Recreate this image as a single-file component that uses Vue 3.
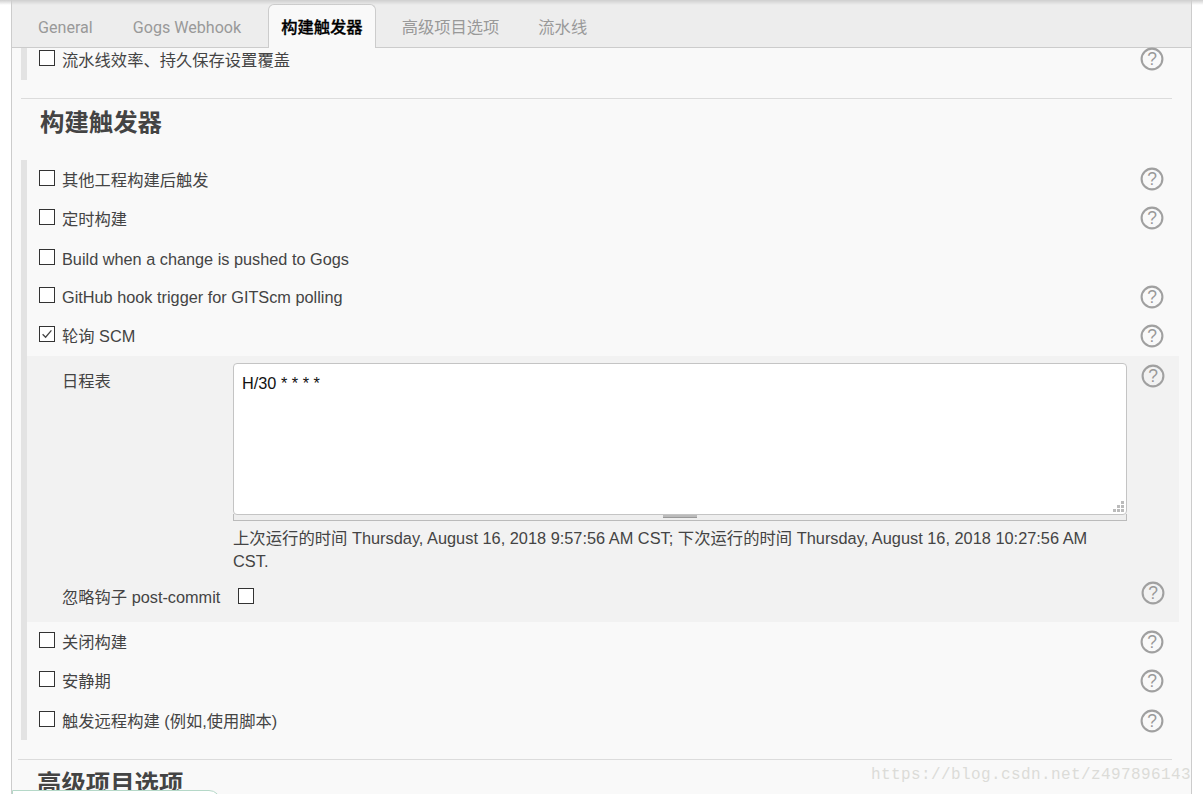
<script setup>
const topRows = [
  { label: '其他工程构建后触发', help: true, h: 39, kind: 'cjk' },
  { label: '定时构建', help: true, h: 41, kind: 'cjk pad' },
  { label: 'Build when a change is pushed to Gogs', help: false, h: 38, kind: '' },
  { label: 'GitHub hook trigger for GITScm polling', help: true, h: 37, kind: 'low' },
  { label: '轮询 SCM', help: true, checked: true, h: 41, kind: 'cjk nudge' }
]
const bottomRows = [
  { label: '关闭构建', help: true, h: 39 },
  { label: '安静期', help: true, h: 40 },
  { label: '触发远程构建 (例如,使用脚本)', help: true, h: 39 }
]
const tabs = [
  { text: 'General', latin: true },
  { text: 'Gogs Webhook', latin: true },
  { text: '构建触发器', active: true },
  { text: '高级项目选项' },
  { text: '流水线' }
]
</script>

<template>
  <div class="page">
    <div class="panel">
      <nav class="tabs">
        <span v-for="t in tabs" :key="t.text" class="tab" :class="{ active: t.active, latin: t.latin }">{{ t.text }}</span>
      </nav>

      <div class="bar-block first">
        <div class="row first-row cjk">
          <span class="box"></span>
          <span class="label">流水线效率、持久保存设置覆盖</span>
          <svg class="help" viewBox="0 0 24 24"><circle cx="12" cy="12" r="10.4" /><text x="12" y="18" text-anchor="middle">?</text></svg>
        </div>
      </div>

      <div class="rule"></div>
      <h2 class="heading">构建触发器</h2>

      <div class="bar-block main">
        <div v-for="r in topRows" :key="r.label" class="row" :class="r.kind" :style="{ height: r.h + 'px' }">
          <span class="box" :class="{ on: r.checked }">
            <svg v-if="r.checked" viewBox="0 0 14 14"><path d="M2.6 7.2 5.6 10.2 11.4 3.4" /></svg>
          </span>
          <span class="label">{{ r.label }}</span>
          <svg v-if="r.help" class="help" viewBox="0 0 24 24"><circle cx="12" cy="12" r="10.4" /><text x="12" y="18" text-anchor="middle">?</text></svg>
        </div>

        <div class="nested">
          <div class="sched">
            <span class="field-label">日程表</span>
            <div class="field">
              <div class="area">
                <span>H/30 * * * *</span>
                <svg class="grip" viewBox="0 0 11 11"><path d="M8 0h3v3H8zM4 4h3v3H4zM8 4h3v3H8zM0 8h3v3H0zM4 8h3v3H4zM8 8h3v3H8z" /></svg>
              </div>
              <div class="handle"><i></i></div>
              <p class="note">上次运行的时间 Thursday, August 16, 2018 9:57:56 AM CST; 下次运行的时间 Thursday, August 16, 2018 10:27:56 AM CST.</p>
            </div>
            <svg class="help nested-help" viewBox="0 0 24 24"><circle cx="12" cy="12" r="10.4" /><text x="12" y="18" text-anchor="middle">?</text></svg>
          </div>
          <div class="ignore">
            <span class="field-label">忽略钩子 post-commit</span>
            <span class="box ignore-box"></span>
            <svg class="help ignore-help" viewBox="0 0 24 24"><circle cx="12" cy="12" r="10.4" /><text x="12" y="18" text-anchor="middle">?</text></svg>
          </div>
        </div>

        <div v-for="r in bottomRows" :key="r.label" class="row lower-row" :style="{ height: r.h + 'px' }">
          <span class="box"></span>
          <span class="label">{{ r.label }}</span>
          <svg class="help" viewBox="0 0 24 24"><circle cx="12" cy="12" r="10.4" /><text x="12" y="18" text-anchor="middle">?</text></svg>
        </div>
      </div>

      <div class="rule lower"></div>
      <h2 class="heading next">高级项目选项</h2>

      <div class="watermark">https://blog.csdn.net/z497896143</div>
      <div class="footer-tab"></div>
    </div>
  </div>
</template>

<style>
html, body { margin: 0; background: #fff; overflow: hidden; }
</style>

<style scoped>
.page {
  width: 1203px;
  height: 794px;
  overflow: hidden;
  position: relative;
  font-family: "Liberation Sans", "Noto Sans CJK SC", sans-serif;
  font-size: 16.3px;
  color: #444;
}
.page::before {
  content: "";
  position: absolute;
  inset: 0 0 auto 0;
  height: 5px;
  background: linear-gradient(#cfcfcf, rgba(240, 240, 240, 0));
  z-index: 3;
}
.panel {
  position: relative;
  margin-left: 11px;
  width: 1181px;
  height: 794px;
  box-sizing: border-box;
  background: #f9f9f9;
  border-left: 1px solid #ccc;
  border-right: 1px solid #ccc;
  overflow: hidden;
}
.tabs {
  height: 48px;
  box-sizing: border-box;
  display: flex;
  align-items: flex-end;
  padding-left: 13px;
  background: #ededed;
  border-bottom: 1px solid #ccc;
}
.tab {
  height: 33px;
  padding: 0 13px;
  margin-right: 13px;
  color: #999;
  white-space: nowrap;
  line-height: 26px;
}
.tab.latin {
  margin-right: 14px;
  font-family: Roboto, "Liberation Sans", sans-serif;
  font-size: 16.1px;
  line-height: 28px;
}
.tab.active {
  position: relative;
  top: 1px;
  height: 44px;
  box-sizing: border-box;
  margin-right: 13px;
  padding: 0 12px;
  line-height: 44px;
  color: #000;
  font-weight: 500;
  -webkit-text-stroke: 0.3px #000;
  background: #f9f9f9;
  border: 1px solid #ccc;
  border-bottom: 0;
  border-radius: 6px 6px 0 0;
}
.bar-block {
  margin-left: 9px;
  border-left: 6px solid #e3e3e3;
}
.bar-block.first {
  height: 32px;
}
.first-row {
  height: 24px;
}
.row {
  display: flex;
  align-items: center;
  box-sizing: border-box;
  padding-left: 12px;
  padding-right: 27px;
}
.row.pad {
  padding-bottom: 1px;
}
.box {
  flex: none;
  box-sizing: border-box;
  width: 16px;
  height: 16px;
  border: 1px solid #333;
  background: #fff;
  position: relative;
  top: -2px;
  margin-right: 7px;
}
.box.on svg {
  display: block;
  width: 14px;
  height: 14px;
}
.box.on path {
  fill: none;
  stroke: #444;
  stroke-width: 1.3;
}
.label {
  flex: 1;
  white-space: nowrap;
  position: relative;
}
.row.cjk .label {
  top: -1px;
}
.row.low .label {
  top: 1px;
}
.lower-row .label {
  top: -2px;
}
.lower-row .box {
  top: -3px;
}
.help {
  flex: none;
  width: 24px;
  height: 24px;
  margin-left: auto;
  position: relative;
  top: -1px;
}
.row.low .help,
.row.nudge .help {
  top: 0;
}
.help circle {
  fill: none;
  stroke: #a0a0a0;
  stroke-width: 2.1;
}
.help text {
  font-family: "Liberation Sans", sans-serif;
  font-size: 17.5px;
  font-weight: 400;
  fill: #999;
}
.rule {
  height: 1px;
  margin: 18px 19px 0 9px;
  background: #dcdcdc;
}
.rule.lower {
  margin: 19px 19px 0 6px;
}
.heading {
  margin: 0;
  padding: 9px 0 0 28px;
  height: 60px;
  box-sizing: border-box;
  font-size: 24.4px;
  line-height: 30px;
  font-weight: 700;
  color: #444;
}
.heading.next {
  padding: 9px 0 0 25px;
}
.main {
  height: 580px;
}
.nested {
  box-sizing: border-box;
  height: 266px;
  margin-right: 12px;
  margin-bottom: 1px;
  background: #f2f2f2;
  padding-left: 35px;
  padding-right: 14px;
}
.main > .row:first-child {
  margin-top: 1px;
}
.sched {
  display: flex;
  align-items: flex-start;
  padding-top: 7px;
}
.field-label {
  flex: none;
  width: 171px;
  white-space: nowrap;
  line-height: 36px;
}
.field {
  flex: none;
  width: 894px;
}
.area {
  box-sizing: border-box;
  position: relative;
  height: 152px;
  padding: 7px 8px;
  background: #fff;
  border: 1px solid #c4c4c4;
  border-radius: 4px;
  color: #111;
  line-height: 24px;
}
.grip {
  position: absolute;
  right: 2px;
  bottom: 2px;
  width: 11px;
  height: 11px;
  fill: #bbb;
}
.handle {
  box-sizing: border-box;
  height: 7px;
  margin-top: -1px;
  background: #eee;
  border: 1px solid #bbb;
  border-top: 0;
  display: flex;
  justify-content: center;
}
.handle i {
  width: 34px;
  height: 4px;
  box-sizing: border-box;
  border-top: 1px solid #999;
  border-bottom: 1px solid #999;
  background: #bbb;
}
.note {
  margin: 6px 0 0;
  padding-right: 30px;
  font-size: 16.35px;
  line-height: 23px;
  color: #444;
}
.nested-help {
  margin-left: 14px;
  top: 1px;
}
.ignore {
  display: flex;
  align-items: center;
  height: 38px;
  margin-top: 6px;
}
.ignore .field-label {
  width: 176px;
  line-height: 38px;
  position: relative;
  top: -1px;
}
.ignore-box {
  top: -2px;
  margin-right: 0;
}
.ignore-help {
  top: -5px;
}
.watermark {
  position: absolute;
  right: 0;
  top: 766px;
  font-family: "Liberation Mono", monospace;
  font-size: 16px;
  letter-spacing: 0.4px;
  color: #dcdcd8;
  white-space: nowrap;
}
.footer-tab {
  position: absolute;
  left: 0;
  top: 790px;
  width: 209px;
  height: 20px;
  box-sizing: border-box;
  background: #fff;
  border: 1px solid #b5d8c8;
  border-radius: 0 12px 0 0;
}
</style>
